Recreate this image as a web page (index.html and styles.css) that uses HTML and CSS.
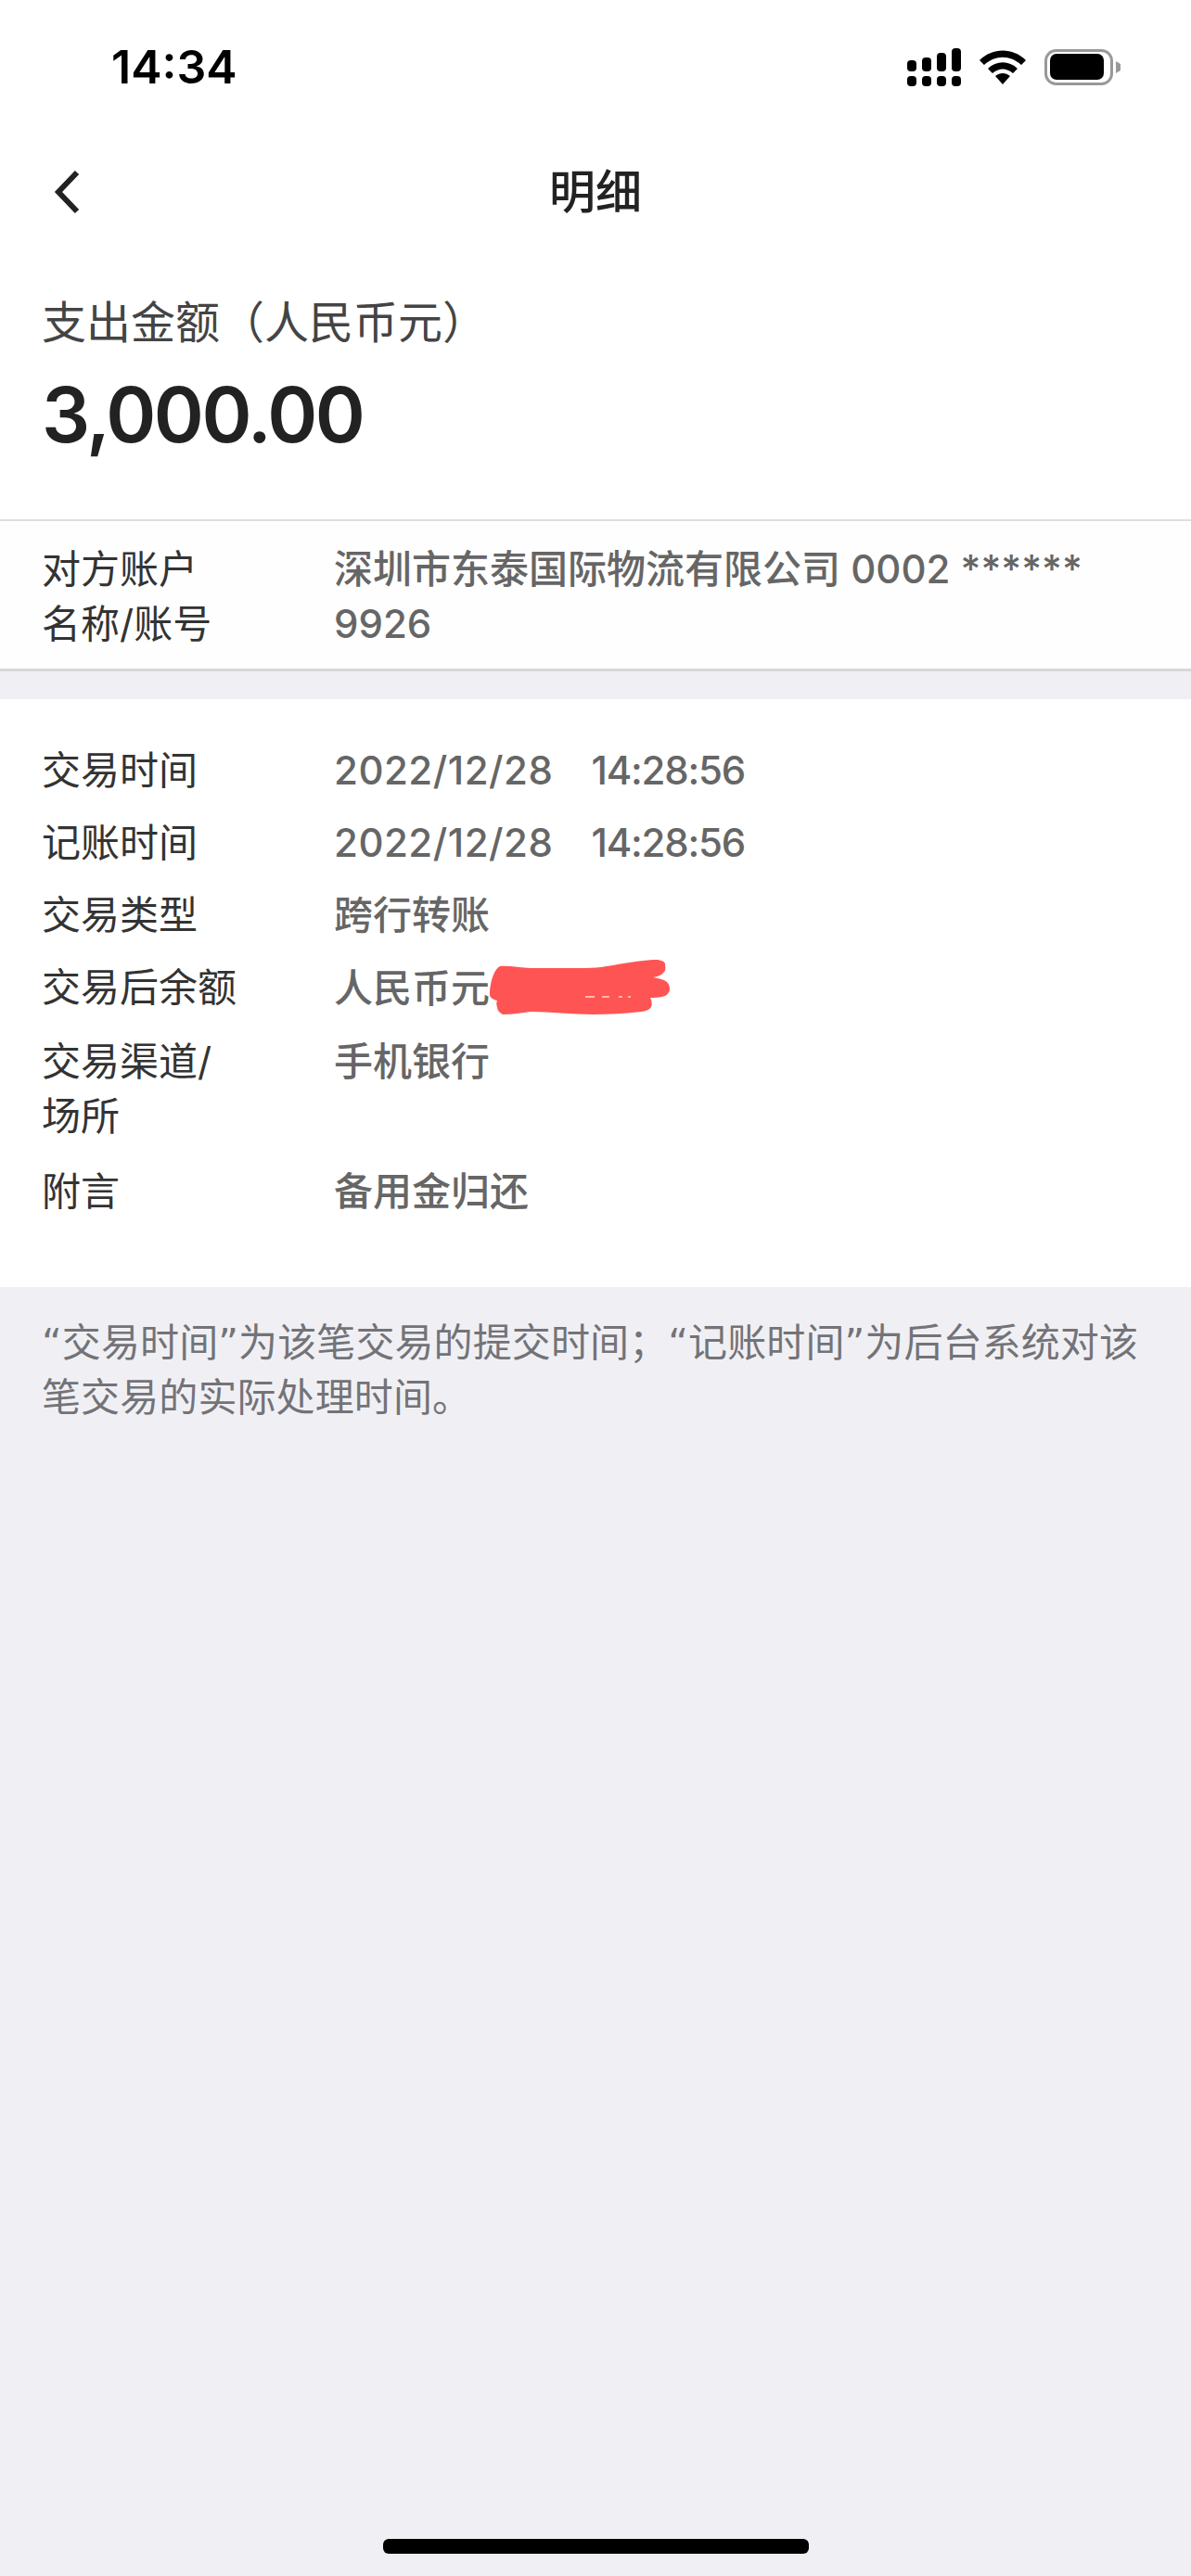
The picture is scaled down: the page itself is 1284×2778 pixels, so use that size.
FILE: index.html
```html
<!DOCTYPE html>
<html lang="en">
<head>
    <meta charset="UTF-8">
    <meta name="viewport" content="width=device-width, initial-scale=1.0">
    <title>明细</title>
    <link rel="stylesheet" href="styles.css">
</head>
<body>
    <!-- Status bar -->
    <div class="status-bar">
        <span class="clock">14:34</span>
        <div class="status-icons">
            <svg class="signal" width="58" height="41" viewBox="0 0 58 41">
                <rect x="0" y="13" width="10" height="12" rx="4"/>
                <rect x="16" y="10" width="10" height="15" rx="4"/>
                <rect x="32" y="5" width="10" height="20" rx="4"/>
                <rect x="48" y="0" width="10" height="25" rx="4"/>
                <rect x="0" y="30" width="10" height="11" rx="4"/>
                <rect x="16" y="30" width="10" height="11" rx="4"/>
                <rect x="32" y="30" width="10" height="11" rx="4"/>
                <rect x="48" y="30" width="10" height="11" rx="4"/>
            </svg>
            <svg class="wifi" width="50" height="37" viewBox="0 0 50 37">
                <path d="M0 11 C14 -3 36 -3 50 11 L45 16 C33 5 17 5 5 16 Z"/>
                <path d="M9 20 C18 11 32 11 41 20 L36 25 C29 19 21 19 14 25 Z"/>
                <path d="M17 28 C22 24 28 24 33 28 L25 37 Z"/>
            </svg>
            <svg class="battery" width="82" height="39" viewBox="0 0 82 39">
                <rect x="1.5" y="1.5" width="71" height="36" rx="11" fill="none" stroke="#999" stroke-width="3"/>
                <rect x="6" y="5" width="58" height="28" rx="7"/>
                <path d="M77 13 L82 16 V23 L77 26 Z" fill="#999"/>
            </svg>
        </div>
    </div>

    <!-- Nav -->
    <div class="nav">
        <svg class="back" width="30" height="50" viewBox="0 0 30 50">
            <path d="M25 4 L5 25 L25 46" fill="none" stroke="#222" stroke-width="6"/>
        </svg>
        <h1 class="nav-title">明细</h1>
    </div>

    <!-- Amount -->
    <div class="amount">
        <div class="amount-label">支出金额（人民币元）</div>
        <div class="amount-value">3,000.00</div>
    </div>

    <!-- Counterparty -->
    <div class="party">
        <div class="row">
            <div class="row-label">对方账户<br>名称/账号</div>
            <div class="row-value">深圳市东泰国际物流有限公司 0002 ****** 9926</div>
        </div>
    </div>

    <!-- Details -->
    <div class="details">
        <div class="row">
            <div class="row-label">交易时间</div>
            <div class="row-value"><span class="date">2022/12/28</span><span class="time">14:28:56</span></div>
        </div>
        <div class="row">
            <div class="row-label">记账时间</div>
            <div class="row-value"><span class="date">2022/12/28</span><span class="time">14:28:56</span></div>
        </div>
        <div class="row">
            <div class="row-label">交易类型</div>
            <div class="row-value">跨行转账</div>
        </div>
        <div class="row">
            <div class="row-label">交易后余额</div>
            <div class="row-value balance">人民币元
                <svg class="scribble" width="196" height="60" viewBox="0 0 196 60">
                    <path d="M1 34 C2 22 6 10 12 7 C22 6 34 9 45 9 L105 9 C120 9 132 6 145 4 C158 2 172 0 182 0 C188 1 191 3 190 6 C191 10 190 13 188 14 C186 17 182 18 177 19 C184 20 190 22 192 24 C195 27 195 30 195 33 C194 36 192 38 190 39 C184 41 178 41 174 41 C176 44 176 48 175 51 C173 54 170 55 165 56 C148 58 130 59 112 59 C90 59 66 56 45 56 C36 57 25 59 15 59 C11 57 9 54 9 51 C8 49 8 46 9 44 C5 43 3 42 1 39 Z" fill="#ff5454"/>
                    <path d="M104 40 H114 M122 40 H130 M140 40 H144 M150 40 H153" stroke="#ffd9d0" stroke-width="1.5"/>
                </svg>
            </div>
        </div>
        <div class="row row-tall">
            <div class="row-label">交易渠道/<br>场所</div>
            <div class="row-value">手机银行</div>
        </div>
        <div class="row">
            <div class="row-label">附言</div>
            <div class="row-value">备用金归还</div>
        </div>
    </div>

    <!-- Footnote -->
    <p class="note">“交易时间”为该笔交易的提交时间；“记账时间”为后台系统对该笔交易的实际处理时间。</p>

    <div class="home-bar"></div>
</body>
</html>
```

FILE: styles.css
```css
* {
    margin: 0;
    padding: 0;
    box-sizing: border-box;
}

body {
    width: 1284px;
    height: 2778px;
    background-color: #f0f0f4;
    font-family: Inter, "Noto Sans CJK SC", sans-serif;
    color: #333;
    display: flex;
    flex-direction: column;
    overflow: hidden;
}

.status-bar {
    height: 142px;
    background-color: #fff;
    display: flex;
    justify-content: space-between;
    align-items: center;
    padding: 2px 76px 0 120px;
}

.clock {
    font-size: 50px;
    font-weight: 600;
    color: #000;
}

.status-icons {
    display: flex;
    align-items: center;
    gap: 20px;
}

.status-icons svg {
    display: block;
}

.nav {
    height: 130px;
    background-color: #fff;
    display: flex;
    align-items: center;
    justify-content: center;
    position: relative;
}

.back {
    position: absolute;
    left: 58px;
    top: 40px;
}

.nav-title {
    font-size: 50px;
    line-height: 60px;
    font-weight: 500;
    color: #222;
}

.amount {
    height: 288px;
    background-color: #fff;
    padding: 42px 45px 0;
}

.amount-label {
    font-size: 48px;
    line-height: 68px;
    color: #444;
}

.amount-value {
    font-size: 82px;
    line-height: 132px;
    font-weight: 600;
    letter-spacing: -2.5px;
    color: #222;
}

.party {
    height: 164px;
    background-color: #fefefe;
    border-top: 2px solid #dedede;
    border-bottom: 3px solid #d8d8dc;
    padding-top: 22px;
}

.details {
    margin-top: 30px;
    height: 634px;
    background-color: #fff;
    padding-top: 47px;
    display: flex;
    flex-direction: column;
    gap: 19px;
}

.row {
    display: flex;
    padding: 0 46px 0 45px;
    font-size: 42px;
    line-height: 59px;
}

.row-tall {
    margin: 1px 0 3px;
}

.row-label {
    width: 316px;
    flex-shrink: 0;
    color: #333;
}

.row-value {
    color: #666;
    font-weight: 500;
    flex: 1;
    margin-left: -1px;
}

.date {
    letter-spacing: 0.5px;
    margin-right: 41px;
}

.time {
    letter-spacing: -1.2px;
}

.balance {
    display: flex;
    align-items: center;
}

.scribble {
    flex-shrink: 0;
    margin-left: -1px;
}

.note {
    padding: 31px 44px 0 45px;
    font-family: "DejaVu Sans", "Noto Sans CJK SC", sans-serif;
    font-size: 42px;
    line-height: 59px;
    letter-spacing: 0.1px;
    color: #737378;
}

.home-bar {
    width: 459px;
    height: 16px;
    border-radius: 6px;
    background-color: #000;
    margin: auto auto 24px;
}
```
